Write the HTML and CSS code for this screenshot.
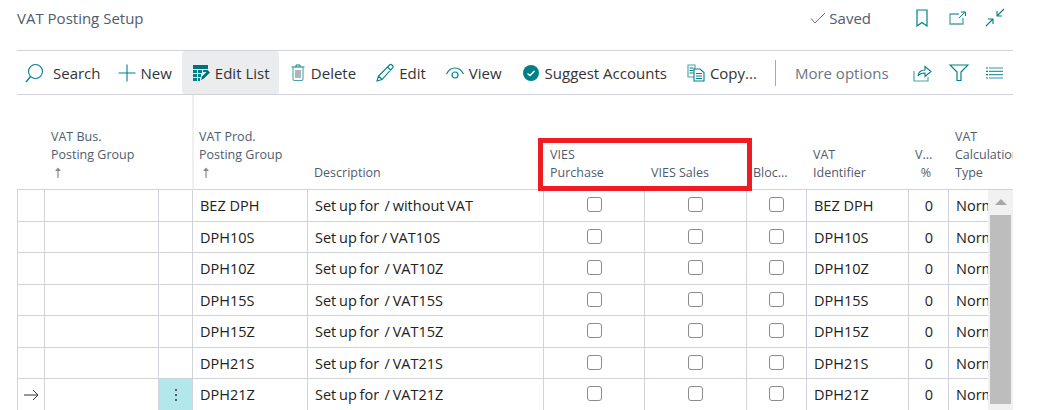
FILE: index.html
```html
<!DOCTYPE html>
<html lang="en">
<head>
<meta charset="utf-8">
<title>VAT Posting Setup</title>
<link rel="stylesheet" href="styles.css">
</head>
<body>
<main class="page">
  <header class="titlebar">
    <h1 class="title">VAT Posting Setup</h1>
    <div class="status">
      <svg class="ico-saved" width="16" height="12" viewBox="0 0 16 12"><path d="M1 6.500 5 11 15 1" fill="none" stroke="#6b7480" stroke-width="1"/></svg>
      <span>Saved</span>
    </div>
    <div class="title-icons">
      <svg class="ico-bookmark" width="12" height="18" viewBox="0 0 12 18"><path d="M1 1h10v16L6 13.500 1 17z" fill="none" stroke="#00808a" stroke-width="1.200"/></svg>
      <svg width="18" height="14" viewBox="0 0 18 14"><path d="M10 3H1v10h13V7" fill="none" stroke="#4da3ab" stroke-width="1.300"/><path d="M10 7l6-6M12 1h4.500v4" fill="none" stroke="#00808a" stroke-width="1"/></svg>
      <svg width="20" height="19" viewBox="0 0 20 19"><path d="M19 1l-7 7M12 3v5h5M1 18l7-7M3 11h5v5" fill="none" stroke="#00808a" stroke-width="1.100"/></svg>
    </div>
  </header>

  <nav class="toolbar">
    <button class="tool t-search">
      <svg width="20" height="20" viewBox="0 0 20 20"><circle cx="10.500" cy="8.500" r="7" fill="none" stroke="#00808a" stroke-width="1.100"/><path d="M5.500 13.500 1 19" stroke="#00808a" stroke-width="1.300"/></svg>
      <span>Search</span>
    </button>
    <button class="tool t-new">
      <svg width="18" height="18" viewBox="0 0 18 18"><path d="M0.500 9h17M9 0.500v17" stroke="#00808a" stroke-width="1.100"/></svg>
      <span>New</span>
    </button>
    <button class="tool t-editlist">
      <svg width="17" height="16" viewBox="0 0 17 16"><path d="M0 0h15v4H0z" fill="#00707a"/><path d="M0 5h4v3H0zM5 5h4v3H5zM10 5h5v2h-5zM0 9h4v3H0zM5 9h3v3H5zM0 13h4v3H0zM5 13h2v3H5z" fill="#00808a"/><path d="M8 15l1-3.500 6-6 2 2-6 6z" fill="#00707a"/></svg>
      <span>Edit List</span>
    </button>
    <button class="tool t-delete">
      <svg width="14" height="17" viewBox="0 0 14 17"><path d="M0.500 3h13M5 3V1h4v2" fill="none" stroke="#00808a" stroke-width="1"/><path d="M2 3.500V15a1.500 1.500 0 0 0 1.500 1.500h7A1.500 1.500 0 0 0 12 15V3.500" fill="none" stroke="#4da3ab" stroke-width="1.100"/><path d="M5 6v8M7 6v8M9 6v8" stroke="#5f6b78" stroke-width="1"/></svg>
      <span>Delete</span>
    </button>
    <button class="tool t-edit">
      <svg width="18" height="19" viewBox="0 0 18 19"><path d="M1 18l1.500-5L13.500 2a1.800 1.800 0 0 1 2.500 0l.500.500a1.800 1.800 0 0 1 0 2.500L6 16.500zM2.500 13 6 16.500M11.500 4 15 7.500" fill="none" stroke="#00808a" stroke-width="1.100"/></svg>
      <span>Edit</span>
    </button>
    <button class="tool t-view">
      <svg width="18" height="12" viewBox="0 0 18 12"><path d="M0.500 7C2.500 3 5.500 1 9 1s6.500 2 8.500 6" fill="none" stroke="#00808a" stroke-width="1.200"/><circle cx="9" cy="8" r="3" fill="none" stroke="#00808a" stroke-width="1.200"/></svg>
      <span>View</span>
    </button>
    <button class="tool t-suggest">
      <svg width="16" height="16" viewBox="0 0 16 16"><circle cx="8" cy="8" r="8" fill="#00808a"/><path d="M4.500 8.500 7 10.500 11.500 6" fill="none" stroke="#fff" stroke-width="1.500"/></svg>
      <span>Suggest Accounts</span>
    </button>
    <button class="tool t-copy">
      <svg width="18" height="18" viewBox="0 0 18 18"><path d="M1 1h7v12H1z" fill="#fff" stroke="#4da3ab" stroke-width="1.100"/><path d="M2.500 4h4M2.500 6.500h4M2.500 9h4" stroke="#00808a"/><path d="M7 5h6l4 3.500V17H7z" fill="#fff" stroke="#00808a" stroke-width="1.100"/><path d="M9 9.500h6M9 12h6M9 14.500h6" stroke="#00808a"/></svg>
      <span>Copy...</span>
    </button>
    <span class="divider"></span>
    <button class="tool more"><span>More options</span></button>
    <div class="tool-icons">
      <svg width="19" height="18" viewBox="0 0 19 18"><path d="M1 7v10h14v-4" fill="none" stroke="#4da3ab" stroke-width="1.200"/><path d="M5 12c.5-4 3.500-6 7-6V2.500L18 7.500l-6 5V9c-3 0-5.500.800-7 3z" fill="none" stroke="#00808a" stroke-width="1.100"/></svg>
      <svg width="20" height="17" viewBox="0 0 20 17"><path d="M1 1h18l-7 7v8.500H8V8z" fill="none" stroke="#00808a" stroke-width="1.200"/></svg>
      <svg width="17" height="12" viewBox="0 0 17 12"><path d="M0 1h2M0 4.300h2M0 7.600h2M0 11h2" stroke="#00808a" stroke-width="1.200"/><path d="M3 1h14M3 4.300h14M3 7.600h14M3 11h14" stroke="#2f9aa3" stroke-width="1.200"/></svg>
    </div>
  </nav>

  <section class="grid-wrap">
    <table class="grid">
      <colgroup>
        <col class="c1"><col class="c2"><col class="c3"><col class="c4"><col class="c5"><col class="c6"><col class="c7"><col class="c8"><col class="c9"><col class="c10"><col class="c11">
      </colgroup>
      <thead>
        <tr>
          <th></th>
          <th class="h-bus">VAT Bus.<br>Posting Group<br><svg class="sort" width="6" height="11" viewBox="0 0 6 11"><path d="M0 4 3 0.500 6 4z" fill="#8a8a8a"/><path d="M3 3v8" stroke="#8a8a8a" stroke-width="1.200"/></svg></th>
          <th></th>
          <th class="h-frozen">VAT Prod.<br>Posting Group<br><svg class="sort" width="6" height="11" viewBox="0 0 6 11"><path d="M0 4 3 0.500 6 4z" fill="#8a8a8a"/><path d="M3 3v8" stroke="#8a8a8a" stroke-width="1.200"/></svg></th>
          <th>Description</th>
          <th>VIES<br>Purchase</th>
          <th>VIES Sales</th>
          <th class="h-blocked">Bloc...</th>
          <th>VAT<br>Identifier</th>
          <th class="h-num">V...<br>%</th>
          <th>VAT<br>Calculation<br>Type</th>
        </tr>
      </thead>
      <tbody>
        <tr><td></td><td></td><td></td><td>BEZ DPH</td><td>Set up for &nbsp;/ without VAT</td><td class="chk"><span class="box"></span></td><td class="chk"><span class="box"></span></td><td class="chk"><span class="box"></span></td><td>BEZ DPH</td><td class="num">0</td><td>Normal</td></tr>
        <tr><td></td><td></td><td></td><td>DPH10S</td><td>Set up for / VAT10S</td><td class="chk"><span class="box"></span></td><td class="chk"><span class="box"></span></td><td class="chk"><span class="box"></span></td><td>DPH10S</td><td class="num">0</td><td>Normal</td></tr>
        <tr><td></td><td></td><td></td><td>DPH10Z</td><td>Set up for &nbsp;/ VAT10Z</td><td class="chk"><span class="box"></span></td><td class="chk"><span class="box"></span></td><td class="chk"><span class="box"></span></td><td>DPH10Z</td><td class="num">0</td><td>Normal</td></tr>
        <tr><td></td><td></td><td></td><td>DPH15S</td><td>Set up for &nbsp;/ VAT15S</td><td class="chk"><span class="box"></span></td><td class="chk"><span class="box"></span></td><td class="chk"><span class="box"></span></td><td>DPH15S</td><td class="num">0</td><td>Normal</td></tr>
        <tr><td></td><td></td><td></td><td>DPH15Z</td><td>Set up for &nbsp;/ VAT15Z</td><td class="chk"><span class="box"></span></td><td class="chk"><span class="box"></span></td><td class="chk"><span class="box"></span></td><td>DPH15Z</td><td class="num">0</td><td>Normal</td></tr>
        <tr><td></td><td></td><td></td><td>DPH21S</td><td>Set up for &nbsp;/ VAT21S</td><td class="chk"><span class="box"></span></td><td class="chk"><span class="box"></span></td><td class="chk"><span class="box"></span></td><td>DPH21S</td><td class="num">0</td><td>Normal</td></tr>
        <tr><td class="arrow"><svg width="15" height="12" viewBox="0 0 15 12"><path d="M0 6h14M9 1l5 5-5 5" fill="none" stroke="#333" stroke-width="1"/></svg></td><td></td><td class="kebab"><span class="dots"><i></i><i></i><i></i></span></td><td>DPH21Z</td><td>Set up for &nbsp;/ VAT21Z</td><td class="chk"><span class="box"></span></td><td class="chk"><span class="box"></span></td><td class="chk"><span class="box"></span></td><td>DPH21Z</td><td class="num">0</td><td>Normal</td></tr>
      </tbody>
    </table>
    <div class="scrollbar">
      <span class="sb-up"></span>
      <span class="sb-thumb"></span>
    </div>
    <div class="highlight"></div>
  </section>
</main>
</body>
</html>
```
FILE: styles.css
```css
* { box-sizing: border-box; }
html, body { margin: 0; height: 410px; overflow: hidden; background: #fff; }
body { font-family: "Open Sans", "Liberation Sans", sans-serif; color: #212121; }

.page { padding: 0 34px 0 17px; }

.titlebar { display: flex; align-items: center; height: 50px; padding-bottom: 15px; }
.title { flex: 1; margin: 0; font-size: 15px; font-weight: 400; color: #505c6d; }
.status { display: flex; align-items: center; gap: 3px; font-size: 15px; color: #505c6d; margin-right: 45px; }
.title-icons { display: flex; align-items: center; gap: 18px; margin-right: 8px; }
.ico-bookmark { margin-right: 3px; }

.toolbar { display: flex; align-items: center; height: 45px; border-top: 1px solid #d2d2da; border-bottom: 1px solid #d2d2da; }
.tool { display: flex; align-items: center; height: 43px; padding: 0; border: 0; background: none; font: inherit; font-size: 15px; color: #333; gap: 5px; white-space: nowrap; }
.t-search { margin-left: 8px; gap: 8px; }
.t-new { margin-left: 17px; }
.t-editlist { margin-left: 10px; padding: 0 0 0 11px; background: #ebecee; border-radius: 3px; width: 97px; }
.t-delete { margin-left: 12px; gap: 6px; }
.t-edit { margin-left: 20px; }
.t-view { margin-left: 20px; }
.t-suggest { margin-left: 21px; gap: 6px; }
.t-copy { margin-left: 20px; }
.divider { width: 1px; height: 26px; background: #a8a8a8; margin-left: 18px; }
.more { margin-left: 19px; color: #6a7584; }
.tool-icons { display: flex; align-items: center; gap: 17px; margin-left: 24px; }

.grid-wrap { position: relative; overflow: hidden; height: 315px; }
.grid { table-layout: fixed; width: 996px; border-collapse: separate; border-spacing: 0; }
.c1 { width: 27px; } .c2 { width: 114px; } .c3 { width: 34px; } .c4 { width: 115px; }
.c5 { width: 236px; } .c6 { width: 101px; } .c7 { width: 102px; } .c8 { width: 60px; }
.c9 { width: 102px; } .c10 { width: 40px; } .c11 { width: 65px; }

.grid th { height: 95px; padding: 0 0 7px 7px; vertical-align: bottom; text-align: left; font-size: 12.5px; font-weight: 400; line-height: 18px; color: #505c6d; border-bottom: 1px solid #d2d2da; white-space: nowrap; overflow: hidden; }
.grid th:first-child { padding: 0; }
.grid th.h-frozen { border-left: 2px solid #f0f0f0; padding-left: 5px; }
.grid th.h-num { text-align: right; padding-right: 17px; }
.sort { margin-left: 4px; vertical-align: -1px; }

.grid td { height: 32px; padding: 0 7px; font-size: 14.5px; border-left: 1px solid #d2d2da; border-bottom: 1px solid #d2d2da; white-space: nowrap; overflow: hidden; }
.grid td:nth-child(5) { word-spacing: -1px; }
.grid tr:nth-child(even) td { height: 31px; }
.grid td.chk { text-align: center; padding: 0; }
.grid td.num { text-align: right; padding-right: 15px; }
.box { display: block; width: 15px; height: 15px; margin: 0 auto 2px; border: 1.5px solid #8c8c8c; border-radius: 3px; }
.grid td.arrow { padding: 0 0 0 6px; }
.arrow svg { display: block; }
.grid td.kebab { padding: 0; background: #b2e8ec; }
.dots { display: flex; flex-direction: column; align-items: center; gap: 3px; }
.dots i { width: 2px; height: 2px; background: #333; border-radius: 50%; }

.scrollbar { position: absolute; top: 95px; right: 0; width: 25px; height: 221px; background: #f1f1f1; display: flex; flex-direction: column; align-items: center; }
.sb-up { width: 0; height: 0; margin-top: 9px; border-left: 6px solid transparent; border-right: 6px solid transparent; border-bottom: 6px solid #a8a8a8; }
.sb-thumb { width: 21px; height: 189px; margin-top: 10px; background: #bdbdbd; }

.highlight { position: absolute; left: 521px; top: 43px; width: 214px; height: 53px; border: 5px solid #ed1c24; pointer-events: none; }
```
